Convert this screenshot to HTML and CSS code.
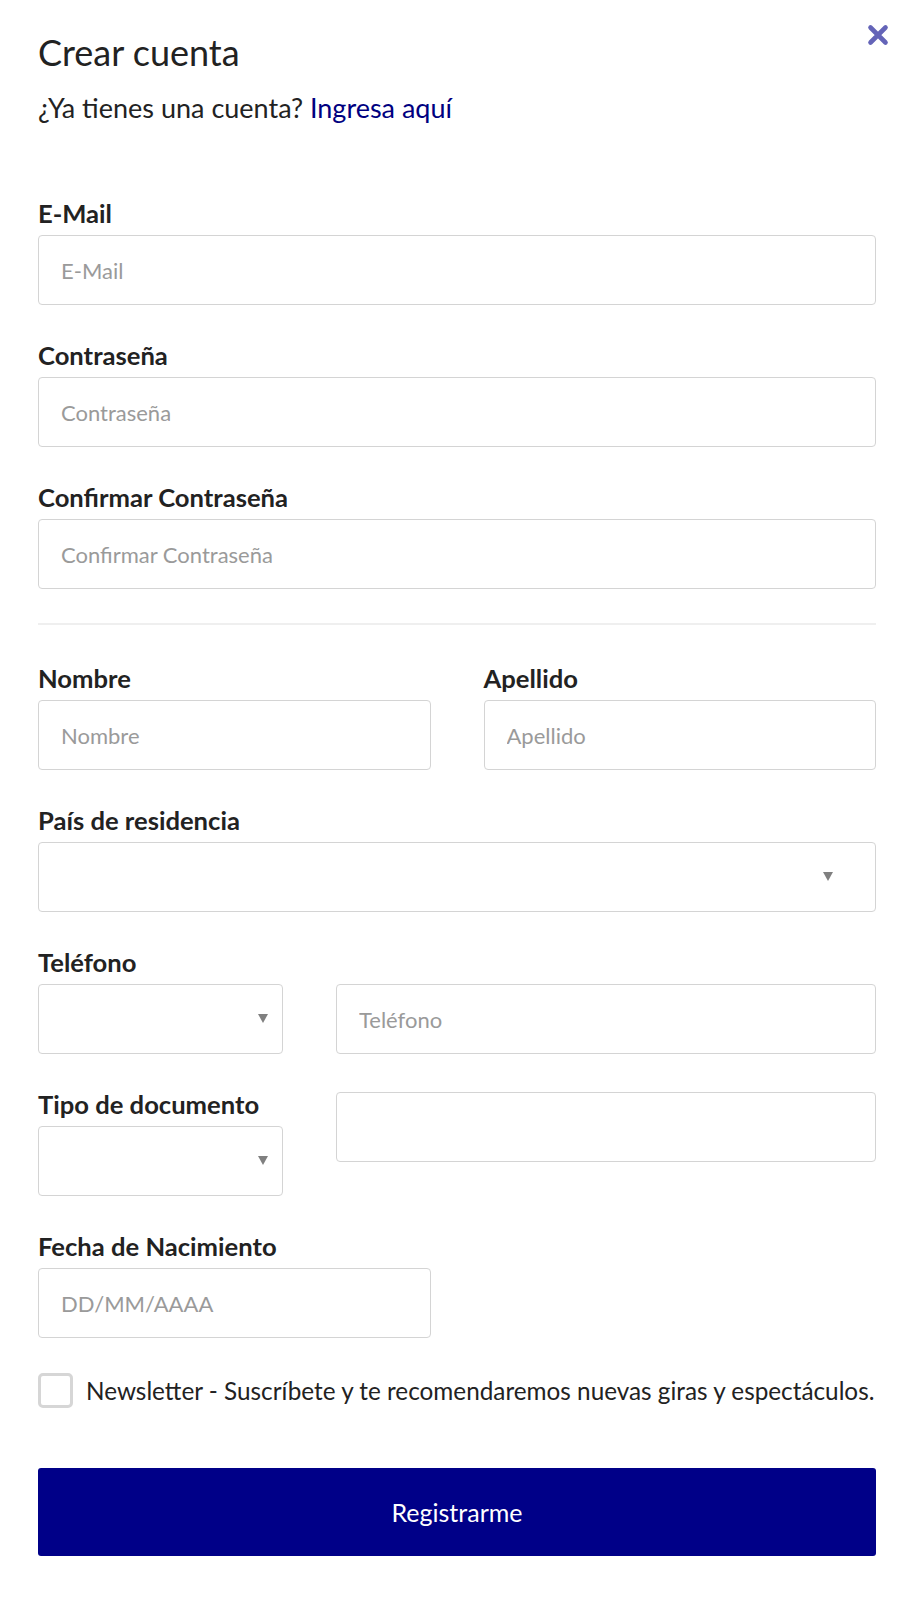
FILE: index.html
```html
<!DOCTYPE html>
<html lang="es">
<head>
<meta charset="utf-8">
<title>Crear cuenta</title>
<link rel="stylesheet" href="styles.css">
</head>
<body>
<div class="modal">
  <button class="close" type="button" aria-label="Cerrar">
    <svg viewBox="0 0 22 22" width="22" height="22"><path d="M3.5 3.5 L18.5 18.5 M18.5 3.5 L3.5 18.5" stroke="#6464b8" stroke-width="4.6" stroke-linecap="round" fill="none"/></svg>
  </button>
  <h1 class="title">Crear cuenta</h1>
  <p class="subtitle">¿Ya tienes una cuenta? <a href="#" class="link">Ingresa aquí</a></p>

  <form class="form">
    <div class="field">
      <label class="label">E-Mail</label>
      <input class="input" type="email" placeholder="E-Mail">
    </div>
    <div class="field">
      <label class="label">Contraseña</label>
      <input class="input" type="password" placeholder="Contraseña">
    </div>
    <div class="field field-last">
      <label class="label">Confirmar Contraseña</label>
      <input class="input" type="password" placeholder="Confirmar Contraseña">
    </div>

    <hr class="divider">

    <div class="row row-half field">
      <div class="col">
        <label class="label">Nombre</label>
        <input class="input" type="text" placeholder="Nombre">
      </div>
      <div class="col">
        <label class="label">Apellido</label>
        <input class="input" type="text" placeholder="Apellido">
      </div>
    </div>

    <div class="field">
      <label class="label">País de residencia</label>
      <div class="select select-wide"><select class="input"><option></option></select></div>
    </div>

    <div class="field">
      <label class="label">Teléfono</label>
      <div class="row row-4-8">
        <div class="select"><select class="input"><option></option></select></div>
        <input class="input" type="tel" placeholder="Teléfono">
      </div>
    </div>

    <div class="row row-4-8 field">
      <div class="col">
        <label class="label">Tipo de documento</label>
        <div class="select"><select class="input"><option></option></select></div>
      </div>
      <div class="col">
        <input class="input" type="text">
      </div>
    </div>

    <div class="row row-half field field-date">
      <div class="col">
        <label class="label">Fecha de Nacimiento</label>
        <input class="input" type="text" placeholder="DD/MM/AAAA">
      </div>
    </div>

    <label class="check">
      <input class="checkbox" type="checkbox">
      <span class="check-text">Newsletter - Suscríbete y te recomendaremos nuevas giras y espectáculos.</span>
    </label>

    <button class="submit" type="submit">Registrarme</button>
  </form>
</div>
</body>
</html>
```

FILE: styles.css
```css
* { box-sizing: border-box; }

body {
  margin: 0;
  background: #ffffff;
  color: #222222;
  font-family: Lato, "Noto Sans", sans-serif;
}

.modal {
  position: relative;
  padding: 32px 35px 40px 38px;
}

.close {
  position: absolute;
  top: 24px;
  right: 22px;
  width: 22px;
  height: 22px;
  padding: 0;
  border: 0;
  background: none;
  cursor: pointer;
}
.close svg { display: block; }

.title {
  margin: 0;
  font-size: 36px;
  font-weight: 400;
  line-height: 40px;
  color: #222222;
}

.subtitle {
  margin: 22px 0 0;
  font-size: 27px;
  line-height: 28px;
  color: #222222;
}

.link {
  color: #000080;
  text-decoration: none;
}

.form {
  margin-top: 79px;
  display: flex;
  flex-direction: column;
}

.field {
  display: flex;
  flex-direction: column;
  margin-bottom: 38px;
}
.field-last { margin-bottom: 0; }
.field-date { margin-bottom: 35px; }

.col {
  display: flex;
  flex-direction: column;
}

.label {
  font-size: 25.6px;
  font-weight: 700;
  line-height: 24px;
  margin-bottom: 10px;
  color: #222222;
}

.input {
  width: 100%;
  height: 70px;
  border: 1px solid #d4d4d4;
  border-radius: 4px;
  padding: 0 22px;
  background: #ffffff;
  font-family: inherit;
  font-size: 22px;
  color: #333333;
  outline: none;
}
.input::placeholder { color: #9a9a9a; }

.divider {
  margin: 34px 0 41px;
  border: 0;
  height: 2px;
  background: #efefef;
}

.row {
  display: grid;
  column-gap: 53px;
}
.row-half { grid-template-columns: 1fr 1fr; }
.row-4-8 { grid-template-columns: 245px 1fr; }

.select {
  position: relative;
}
.select select {
  appearance: none;
  -webkit-appearance: none;
}
.select::after {
  content: "";
  position: absolute;
  right: 15px;
  top: 50%;
  margin-top: -5px;
  border-left: 5px solid transparent;
  border-right: 5px solid transparent;
  border-top: 9px solid #808080;
  pointer-events: none;
}
.select-wide::after { right: 43px; }

.check {
  display: flex;
  align-items: center;
  gap: 13px;
  cursor: pointer;
}

.checkbox {
  appearance: none;
  -webkit-appearance: none;
  margin: 0;
  width: 35px;
  height: 35px;
  flex: none;
  border: 3px solid #d6d6d6;
  border-radius: 5px;
  background: #ffffff;
}

.check-text {
  font-size: 24.3px;
  line-height: 28px;
  color: #222222;
}

.submit {
  margin-top: 60px;
  height: 88px;
  width: 100%;
  border: 0;
  border-radius: 3px;
  background: #000088;
  color: #ffffff;
  font-family: inherit;
  font-size: 25px;
  cursor: pointer;
}
```
